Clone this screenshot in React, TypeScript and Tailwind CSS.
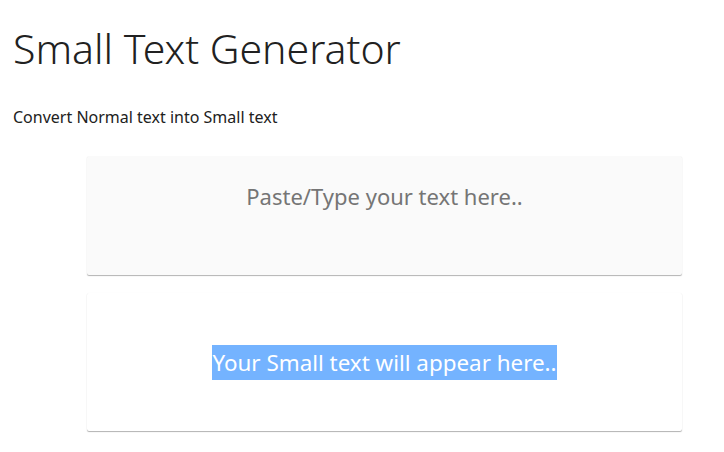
export default function App() {
  return (
    <div className="min-h-screen bg-white text-[#212121]" style={{ fontFamily: '"Noto Sans", "Open Sans", sans-serif' }}>
      <div className="px-[13px] pt-[22px]">
        <h1 className="text-[41px] font-light leading-[52px]">Small Text Generator</h1>
        <p className="mt-[33px] text-[16px] leading-[20px]">Convert Normal text into Small text</p>
      </div>
      <div className="ml-[87px] mt-[29px] w-[595px] flex flex-col gap-[18px]">
        <div className="h-[119px] rounded-[2px] bg-[#fafafa] pt-[24px] text-center text-[22px] text-[#757575] shadow-[0_1px_1px_rgba(0,0,0,0.3)]">
          Paste/Type your text here..
        </div>
        <div className="flex h-[138px] items-center justify-center rounded-[2px] bg-white shadow-[0_1px_1px_rgba(0,0,0,0.3),0_0_1px_rgba(0,0,0,0.06)]">
          <span className="bg-[#74b3ff] text-[22.4px] leading-[35px] text-white">Your Small text will appear here..</span>
        </div>
      </div>
    </div>
  );
}
